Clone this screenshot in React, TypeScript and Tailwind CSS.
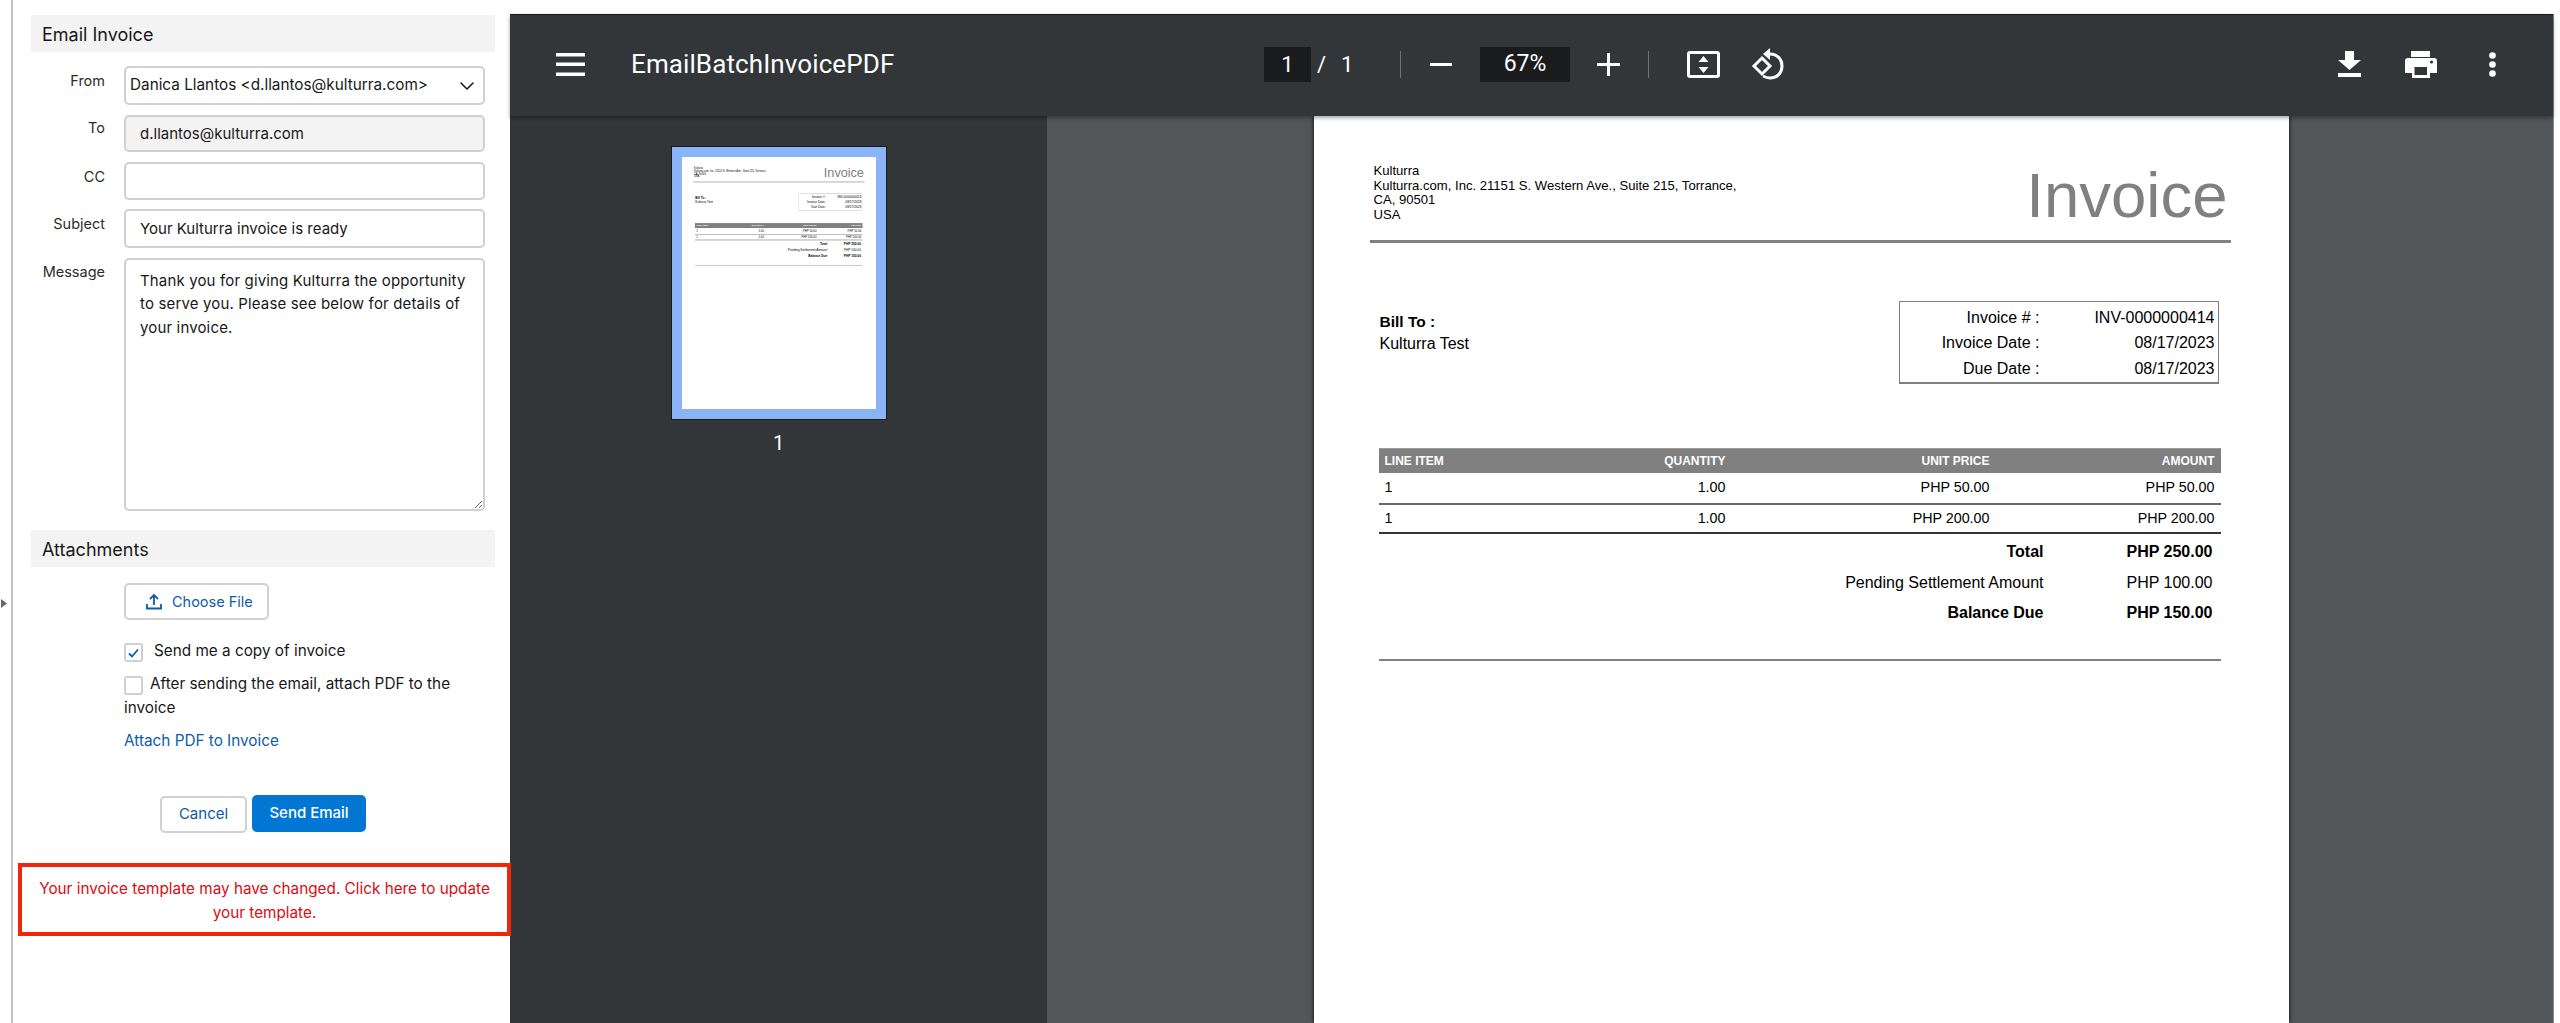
import React from "react";
import { ChevronDown } from "lucide-react";

const inputBase = "w-[361px] border-2 border-[#d0d0d0] rounded-[5px] text-[15px] text-[#181818] outline-none block";

const FieldRow: React.FC<{ label: string; className?: string; labelClass?: string; children: React.ReactNode }> = ({ label, className, labelClass, children }) => (
  <div className={`flex ${className ?? ""}`}>
    <label className={`w-[92px] text-right text-[14.5px] leading-[23px] text-[#2b2b2b] ${labelClass ?? "pt-[3px]"}`}>{label}</label>
    <div className="ml-[19px]">{children}</div>
  </div>
);

const SectionHeader: React.FC<{ title: string; className?: string }> = ({ title, className }) => (
  <div className={`ml-[18px] w-[464px] h-[37px] bg-[#f3f3f3] pl-[11px] text-[18px] leading-[39px] text-[#181818] ${className ?? ""}`}>{title}</div>
);

const EmailForm: React.FC = () => (
  <div className="w-[499px] shrink-0 border-l-2 border-[#c4c4c4] pt-[15px] font-['Inter',sans-serif]">
    <SectionHeader title="Email Invoice" />

    <FieldRow label="From" className="mt-[14px]">
      <div className={`${inputBase} h-[39px] pl-[4px] pr-[4px] flex items-center justify-between`}>
        <span className="text-[15.3px]">Danica Llantos &lt;d.llantos@kulturra.com&gt;</span>
        <ChevronDown size={24} strokeWidth={1.5} className="text-[#181818]" />
      </div>
    </FieldRow>
    <FieldRow label="To" className="mt-[10px]" labelClass="pt-px">
      <input readOnly defaultValue="d.llantos@kulturra.com" className={`${inputBase} h-[37px] pl-[14px] bg-[#f3f3f3]`} />
    </FieldRow>
    <FieldRow label="CC" className="mt-[10px]">
      <input readOnly className={`${inputBase} h-[38px] pl-[14px]`} />
    </FieldRow>
    <FieldRow label="Subject" className="mt-[9px]">
      <input readOnly defaultValue="Your Kulturra invoice is ready" className={`${inputBase} h-[39px] pl-[14px]`} />
    </FieldRow>
    <FieldRow label="Message" className="mt-[10px]" labelClass="pt-[2px]">
      <textarea
        readOnly
        defaultValue="Thank you for giving Kulturra the opportunity to serve you. Please see below for details of your invoice."
        className={`${inputBase} h-[253px] pl-[14px] pr-[14px] pt-[9px] leading-[23.3px] tracking-[0.15px]`}
      />
    </FieldRow>

    <SectionHeader title="Attachments" className="mt-[19px]" />

    <div className="ml-[111px] text-[15.3px] text-[#181818] w-[361px]">
      <button className="mt-[16px] w-[145px] h-[37px] border-2 border-[#d0d0d0] rounded-[5px] flex items-center pl-[19px] text-[#0b5cab] text-[14.5px]">
        <svg width="18" height="17" viewBox="0 0 18 17" fill="none" stroke="#0b5cab" strokeWidth="1.8" className="mr-[9px]">
          <path d="M9 12V2M5 6l4-4 4 4M2 11v4.5h14V11" />
        </svg>
        Choose File
      </button>

      <div className="mt-[23px] flex items-center h-[19px]">
        <div className="w-[19px] h-[19px] border-2 border-[#d0d0d0] rounded-[3px] flex items-center justify-center">
          <svg width="11" height="10" viewBox="0 0 11 10" fill="none" stroke="#0b5cab" strokeWidth="1.8">
            <path d="M1 5.5l3 3 6-7" />
          </svg>
        </div>
        <span className="ml-[11px] -mt-[3px]">Send me a copy of invoice</span>
      </div>

      <div className="mt-[10px] leading-[23.5px]">
        <span className="inline-block align-middle w-[19px] h-[19px] border-2 border-[#d0d0d0] rounded-[3px] mr-[7px] mt-[2px]"></span>
        After sending the email, attach PDF to the invoice
      </div>

      <a className="block mt-[10px] leading-[23px] text-[#0b5cab]">Attach PDF to Invoice</a>
    </div>

    <div className="ml-[147px] mt-[43px] flex items-start text-[15px]">
      <button className="mt-px w-[87px] h-[37px] border-2 border-[#d0d0d0] rounded-[5px] text-[#0b5cab]">Cancel</button>
      <button className="ml-[5px] w-[114px] h-[37px] rounded-[5px] bg-[#0176d3] text-white font-medium">Send Email</button>
    </div>

    <div className="mt-[30px] ml-[5px] w-[493px] h-[73px] border-[4px] border-[#f0260b] pt-[2px] flex items-center justify-center text-center text-[15.3px] leading-[23.3px] text-[#dd0a12] px-[10px] bg-white relative">
      Your invoice template may have changed. Click here to update your template.
    </div>
  </div>
);

const InvoiceBody: React.FC = () => (
  <div className="w-[975px] font-['Liberation_Sans',Arial,sans-serif] text-black">
    <div className="pt-[48px] pl-[60px] pr-[61px] h-[124px] flex justify-between items-start">
      <div className="w-[375px] text-[13.1px] leading-[14.7px]">
        <p>Kulturra</p>
        <p>Kulturra.com, Inc. 21151 S. Western Ave., Suite 215, Torrance, CA, 90501</p>
        <p>USA</p>
      </div>
      <div className="text-[63.5px] leading-[63px] text-[#808080]">Invoice</div>
    </div>
    <div className="ml-[56px] w-[861px] h-[3px] bg-[#808080]" />

    <div className="mt-[58px] flex justify-between pl-[66px] pr-[70px] text-[16px]">
      <div className="mt-[10px] leading-[22px]">
        <p className="font-bold text-[15.5px]">Bill To :</p>
        <p>Kulturra Test</p>
      </div>
      <div className="w-[320px] h-[83px] border border-b-2 border-[#808080] pt-[3px] pr-[3px] grid grid-cols-[140px_1fr] auto-rows-[25.5px] items-center text-right">
        <span>Invoice # :</span><span>INV-0000000414</span>
        <span>Invoice Date :</span><span>08/17/2023</span>
        <span>Due Date :</span><span>08/17/2023</span>
      </div>
    </div>

    <div className="mt-[64px] ml-[65px] w-[842px]">
      <div className="h-[25px] bg-[#808080] border-t border-[#999] px-[6px] grid grid-cols-[200px_141px_264px_225px] items-center text-[12px] font-bold text-white text-right">
        <span className="text-left">LINE ITEM</span><span>QUANTITY</span><span>UNIT PRICE</span><span>AMOUNT</span>
      </div>
      <div className="h-[30px] px-[6px] grid grid-cols-[200px_141px_264px_225px] items-center text-[14.3px] text-right">
        <span className="text-left">1</span><span>1.00</span><span>PHP 50.00</span><span>PHP 50.00</span>
      </div>
      <div className="h-[2px] bg-[#666]" />
      <div className="h-[27px] px-[6px] grid grid-cols-[200px_141px_264px_225px] items-center text-[14.3px] text-right">
        <span className="text-left">1</span><span>1.00</span><span>PHP 200.00</span><span>PHP 200.00</span>
      </div>
      <div className="h-[2px] bg-[#333]" />
      <div className="mt-[3px] grid grid-cols-[665px_169px] auto-rows-[30.5px] items-center text-[16px] text-right">
        <span className="font-bold">Total</span><span className="font-bold">PHP 250.00</span>
        <span>Pending Settlement Amount</span><span>PHP 100.00</span>
        <span className="font-bold">Balance Due</span><span className="font-bold">PHP 150.00</span>
      </div>
      <div className="mt-[30px] h-[2px] bg-[#808080]" />
    </div>
  </div>
);

const Toolbar: React.FC = () => (
  <div className="relative z-10 h-[102px] shrink-0 bg-[#323639] border-t border-[#1a1a1a] pb-[3px] flex items-center text-white font-['Roboto',sans-serif] shadow-[0_2px_4px_rgba(0,0,0,0.35)]">
    <div className="w-[754px] pl-[46px] flex items-center">
      <svg width="29" height="23" viewBox="0 0 29 23" fill="white">
        <rect y="0" width="29" height="3.5" />
        <rect y="9.5" width="29" height="3.5" />
        <rect y="19.5" width="29" height="3.5" />
      </svg>
      <span className="ml-[46px] text-[26px] font-normal tracking-[0.1px]">EmailBatchInvoicePDF</span>
    </div>

    <div className="w-[47px] h-[35px] bg-[#191b1c] flex items-center justify-center text-[22px]">1</div>
    <span className="ml-[6px] text-[22px] w-[10px]">/</span>
    <span className="ml-[14px] text-[22px] w-[12px]">1</span>
    <div className="ml-[47px] w-px h-[27px] bg-[#6f7376]" />
    <svg width="22" height="3" viewBox="0 0 22 3" fill="white" className="ml-[29px]"><rect width="22" height="3" /></svg>
    <div className="ml-[28px] w-[90px] h-[35px] bg-[#191b1c] flex items-center justify-center text-[23px]">67%</div>
    <svg width="23" height="23" viewBox="0 0 23 23" fill="white" className="ml-[27px]">
      <rect y="10" width="23" height="3" /><rect x="10" width="3" height="23" />
    </svg>
    <div className="ml-[28px] w-px h-[27px] bg-[#6f7376]" />

    <svg width="33" height="27" viewBox="0 0 33 27" className="ml-[38px]">
      <rect x="1.5" y="1.5" width="30" height="24" rx="1.5" fill="none" stroke="white" strokeWidth="3" />
      <path d="M16.5 5l5 6h-10zM16.5 22l5-6h-10z" fill="white" />
    </svg>
    <svg width="38" height="36" viewBox="0 0 38 36" className="ml-[28px]" fill="none" stroke="white" strokeWidth="3">
      <path d="M14 12l8 8-8 8-8-8z" />
      <path d="M22 8c7 0 12 5 12 12s-5 12-12 12c-3 0-5-1-7-2" />
      <path d="M15 8l7-6v12z" fill="white" stroke="none" />
    </svg>

    <div className="ml-auto flex items-center pr-[57px]">
      <svg width="23" height="26" viewBox="0 0 23 26" fill="white">
        <path d="M7 0h9v9h7L11.500 19 0 9h7z" /><rect y="22" width="23" height="4" />
      </svg>
      <svg width="32" height="27" viewBox="0 0 32 27" className="ml-[44px]">
        <path d="M6 0h19v6H6z" fill="white" />
        <path d="M3 7h26a3 3 0 0 1 3 3v12h-7v5H7v-5H0V10a3 3 0 0 1 3-3z" fill="white" />
        <rect x="9.500" y="16" width="12.500" height="8" fill="#323639" />
        <circle cx="26.500" cy="11" r="1.600" fill="#323639" />
      </svg>
      <svg width="7" height="25" viewBox="0 0 7 25" fill="white" className="ml-[52px]">
        <circle cx="3.500" cy="3.500" r="3.300" /><circle cx="3.500" cy="12.500" r="3.300" /><circle cx="3.500" cy="21.500" r="3.300" />
      </svg>
    </div>
  </div>
);

const Sidebar: React.FC = () => (
  <div className="w-[537px] shrink-0 bg-[#323639] pt-[30px] flex flex-col items-center">
    <div className="w-[216px] h-[274px] bg-[#8ab4f8] border border-[#1a1a1a] p-[10px]">
      <div className="w-[194px] h-[252px] bg-white overflow-hidden">
        <div className="origin-top-left scale-[0.199]"><InvoiceBody /></div>
      </div>
    </div>
    <div className="mt-[9px] text-white text-[20px] font-['Roboto',sans-serif] leading-[28px]">1</div>
  </div>
);

const PdfViewer: React.FC = () => (
  <div className="w-[2044px] h-[1009px] mt-[14px] flex flex-col border-r border-[#8a8d90]">
    <Toolbar />
    <div className="flex flex-1 min-h-0">
      <Sidebar />
      <div className="flex-1 bg-[#525659] flex justify-center overflow-hidden">
        <div className="ml-[2px] w-[975px] h-full bg-white shadow-[0_0_4px_#000]">
          <InvoiceBody />
        </div>
      </div>
    </div>
  </div>
);

export default function App() {
  return (
    <div className="h-[1023px] w-[2560px] bg-white flex overflow-hidden">
      <div className="w-[11px] shrink-0 pt-[599px] pl-px">
        <svg width="6" height="9" viewBox="0 0 6 9" fill="#6b6b6b"><path d="M0 0l6 4.500L0 9z" /></svg>
      </div>
      <EmailForm />
      <PdfViewer />
    </div>
  );
}
